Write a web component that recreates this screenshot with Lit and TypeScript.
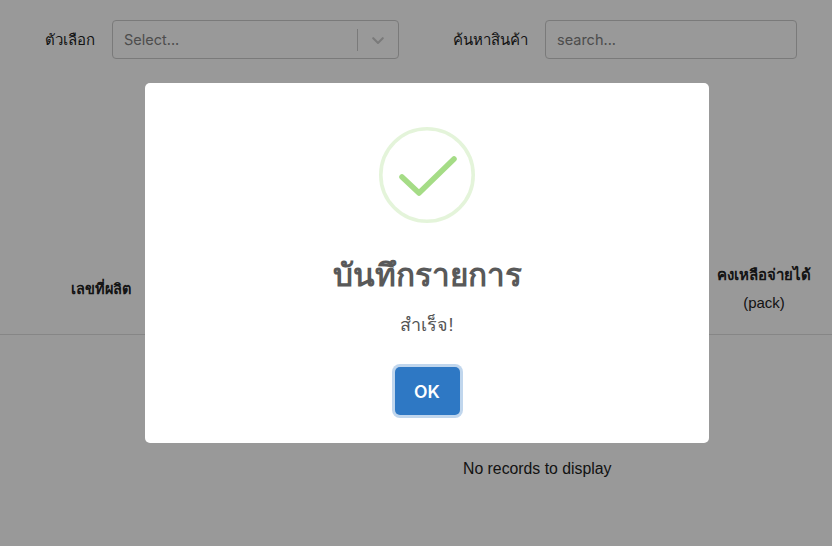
import {LitElement, html, css} from 'lit';
import {customElement} from 'lit/decorators.js';

@customElement('app-root')
export class AppRoot extends LitElement {
  static styles = css`
    :host {
      display: block;
      position: relative;
      width: 832px;
      height: 546px;
      overflow: hidden;
      background: #fff;
      font-family: "Liberation Sans", "Noto Sans", "Noto Sans CJK SC", sans-serif;
      color: #222;
    }
    .filters {
      display: flex;
      align-items: center;
      padding: 20px 0 0 45px;
      height: 39px;
    }
    .label {
      font-size: 15px;
      font-weight: 500;
    }
    .label-select {
      width: 67px;
    }
    .label-search {
      width: 92px;
    }
    .select,
    .search {
      box-sizing: border-box;
      height: 39px;
      border: 1px solid #ccc;
      border-radius: 4px;
      font-family: 'Inter', sans-serif;
      font-size: 14.5px;
      color: #808080;
      display: flex;
      align-items: center;
      padding-left: 11px;
    }
    .select {
      width: 287px;
      margin-right: 54px;
    }
    .search {
      width: 252px;
    }
    .select span {
      flex: 1;
    }
    .sep {
      width: 1px;
      height: 22px;
      background: #ccc;
    }
    .chev {
      width: 40px;
      display: flex;
      justify-content: center;
    }
    .thead {
      margin-top: 201px;
      height: 75px;
      border-bottom: 1px solid #e0e0e0;
      display: flex;
      justify-content: space-between;
      align-items: flex-start;
      box-sizing: border-box;
      color: #222;
    }
    .th {
      text-align: center;
      font-weight: 700;
    }
    .th small {
      display: block;
      font-size: 15px;
      font-weight: 400;
    }
    .th-lot {
      margin: 17px 0 0 71px;
      font-size: 14.5px;
      line-height: 24px;
    }
    .th-left {
      margin: 1px 21px 0 0;
      font-size: 15px;
      line-height: 28px;
    }
    .empty {
      padding-top: 124px;
      padding-left: 463px;
      font-size: 15.8px;
      line-height: 20px;
      color: #222;
    }
    .overlay {
      position: absolute;
      inset: 0;
      background: rgba(0, 0, 0, 0.4);
      display: flex;
      justify-content: flex-start;
      padding: 83px 0 0 145px;
    }
    .modal {
      box-sizing: border-box;
      width: 564px;
      height: 360px;
      background: #fff;
      border-radius: 5px;
      display: flex;
      flex-direction: column;
      align-items: center;
      padding-top: 44px;
    }
    .icon {
      display: block;
    }
    .title {
      margin-top: 30px;
      font-size: 31.5px;
      line-height: 44px;
      font-weight: 700;
      color: #595959;
    }
    .text {
      margin-top: 16px;
      font-size: 18px;
      line-height: 24px;
      color: #545454;
    }
    .ok {
      margin-top: 30px;
      box-sizing: border-box;
      width: 65px;
      height: 48px;
      border: none;
      border-radius: 5px;
      background: #2e78c4;
      color: #fff;
      font-family: 'Inter', sans-serif;
      font-weight: 600;
      font-size: 17.5px;
      box-shadow: 0 0 0 3px rgba(46, 120, 196, 0.3);
    }
  `;

  render() {
    return html`
      <div class="filters">
        <div class="label label-select">ตัวเลือก</div>
        <div class="select">
          <span>Select...</span>
          <div class="sep"></div>
          <div class="chev">
            <svg width="20" height="20" viewBox="0 0 20 20" fill="#ccc">
              <path d="M4.5 7.4 a1 1 0 0 1 1.5 0 L10 11.4 l4-4 a1 1 0 0 1 1.5 0 a1 1 0 0 1 0 1.5 L10.7 13.7 a1 1 0 0 1 -1.4 0 L4.5 8.9 a1 1 0 0 1 0-1.5z"></path>
            </svg>
          </div>
        </div>
        <div class="label label-search">ค้นหาสินค้า</div>
        <div class="search">search...</div>
      </div>
      <div class="thead">
        <div class="th th-lot">เลขที่ผลิต</div>
        <div class="th th-left">คงเหลือจ่ายได้<small>(pack)</small></div>
      </div>
      <div class="empty">No records to display</div>
      <div class="overlay">
        <div class="modal">
          <svg class="icon" width="96" height="96" viewBox="0 0 96 96" fill="none">
            <circle cx="48" cy="48" r="46.2" stroke="#a5dc86" stroke-opacity="0.3" stroke-width="3.6"></circle>
            <path d="M23 50 L40 66 L75 32" stroke="#a5dc86" stroke-width="5.5" stroke-linecap="round" stroke-linejoin="round"></path>
          </svg>
          <div class="title">บันทึกรายการ</div>
          <div class="text">สำเร็จ!</div>
          <button class="ok">OK</button>
        </div>
      </div>
    `;
  }
}
